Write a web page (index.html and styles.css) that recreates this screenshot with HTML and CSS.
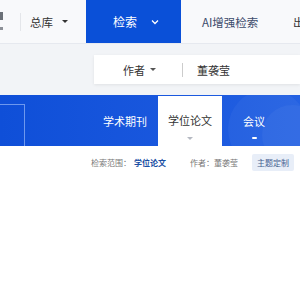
FILE: index.html
```html
<!DOCTYPE html>
<html lang="zh">
<head>
<meta charset="utf-8">
<link rel="stylesheet" href="styles.css">
</head>
<body>
<div class="page">
  <div class="topbar">
    <div class="logo-frag"><span class="lf1"></span><span class="lf2"></span></div>
    <div class="sep"></div>
    <div class="lib">总库<span class="tri"></span></div>
    <div class="search-tab">检索
      <svg class="chev" width="8" height="6" viewBox="0 0 8 6"><polyline points="1,1.5 4,4.5 7,1.5" fill="none" stroke="#fff" stroke-width="1.3"/></svg>
    </div>
    <div class="ai">AI增强检索</div>
    <div class="out">出版</div>
  </div>
  <div class="row2">
    <div class="input">
      <div class="field">作者<span class="tri"></span></div>
      <div class="vsep"></div>
      <div class="query">董袭莹</div>
    </div>
  </div>
  <div class="band">
    <div class="circle c1"></div>
    <div class="circle c2"></div>
    <div class="leftbox"></div>
    <div class="tab t1">学术期刊</div>
    <div class="tab active">学位论文<span class="mark"></span></div>
    <div class="tab t3">会议<span class="dash"></span></div>
  </div>
  <div class="info">
    <span class="lbl">检索范围：</span>
    <span class="scope">学位论文</span>
    <span class="author">作者：董袭莹</span>
    <span class="tag">主题定制</span>
  </div>
</div>
</body>
</html>
```
FILE: styles.css
```css
html, body { margin: 0; padding: 0; background: #fff; }
.page {
  width: 300px; height: 300px; overflow: hidden;
  font-family: "Noto Sans CJK SC", "Noto Sans", sans-serif;
}
.topbar {
  height: 43px; display: flex; align-items: center;
  background: #f8f9fb; border-bottom: 1px solid #e6e9ef;
  white-space: nowrap;
}
.topbar > * { flex-shrink: 0; }
.logo-frag { width: 4px; height: 43px; display: flex; flex-direction: column; }
.lf1 { display: block; width: 3px; height: 8px; background: #6b7078; margin-top: 12px; }
.lf2 { display: block; width: 3px; height: 3px; background: #8c9097; margin-top: 7px; }
.sep { width: 1px; height: 18px; background: #e4e6ea; margin-left: 16px; }
.lib {
  margin-left: 9px; width: 56px; font-size: 11.5px; color: #333;
  display: flex; align-items: center;
}
.tri {
  display: inline-block; width: 0; height: 0;
  border-left: 3px solid transparent; border-right: 3px solid transparent;
  border-top: 3.5px solid #333; margin-left: 9px;
}
.search-tab {
  width: 95px; height: 43px; background: #0a50d8; color: #fff;
  font-size: 12px; display: flex; align-items: center;
  padding-left: 27px; box-sizing: border-box;
}
.chev { margin-left: 14px; }
.ai { margin-left: 21px; font-size: 11.5px; color: #3c4b6b; width: 91px; }
.out { font-size: 11.5px; color: #333; }

.row2 {
  height: 51px; background: #f2f4f7; box-sizing: border-box;
  padding: 11px 0 0 94px;
}
.input {
  height: 29px; background: #fff; display: flex; align-items: center;
  box-shadow: 0 1px 3px rgba(0,0,0,0.08); white-space: nowrap;
}
.input > * { flex-shrink: 0; }
.field { margin-left: 29px; font-size: 11px; color: #333; width: 59px; display: flex; align-items: center; }
.field .tri { margin-left: 5px; border-top-color: #555; }
.vsep { width: 1px; height: 14px; background: #ccc; }
.query { margin-left: 14px; font-size: 11px; color: #333; }

.band {
  position: relative; height: 51px; overflow: hidden;
  background: linear-gradient(90deg, #0f4fd8 0%, #1a58de 60%, #2461e2 100%);
  display: flex; align-items: flex-end;
}
.band > * { flex-shrink: 0; }
.circle { position: absolute; border-radius: 50%; background: rgba(255,255,255,0.04); }
.c1 { width: 80px; height: 80px; left: 228px; top: -6px; }
.c2 { width: 60px; height: 60px; left: 262px; top: 10px; }
.leftbox {
  align-self: flex-end; width: 25px; height: 42px; box-sizing: border-box;
  border: 1px solid #6e98ee; border-left: none; border-bottom: none;
  margin-right: 78px;
}
.tab {
  position: relative; height: 50px; display: flex; align-items: center; justify-content: center;
  font-size: 11px; color: #fff; white-space: nowrap;
}
.t1 { width: 44px; margin-right: 11px; }
.active { width: 64px; background: #fff; color: #333; padding-bottom: 2px; box-sizing: border-box; }
.t3 { width: 22px; margin-left: 21px; }
.mark {
  position: absolute; left: 29px; bottom: 6px; width: 0; height: 0;
  border-left: 3px solid transparent; border-right: 3px solid transparent;
  border-top: 3px solid #b5b9c2;
}
.dash { position: absolute; left: 9px; bottom: 7px; width: 5px; height: 2px; background: #fff; border-radius: 1px; }

.info {
  height: 30px; display: flex; align-items: center; white-space: nowrap;
  font-size: 8px; padding-left: 91px;
  margin-top: 1px;
}
.info > * { flex-shrink: 0; }
.lbl { color: #777; width: 43px; }
.scope { color: #1b4fa3; font-weight: bold; width: 56px; }
.author { color: #777; width: 62px; }
.tag { background: #e8eef8; color: #44608f; padding: 3px 5px; border-radius: 2px; }
```
